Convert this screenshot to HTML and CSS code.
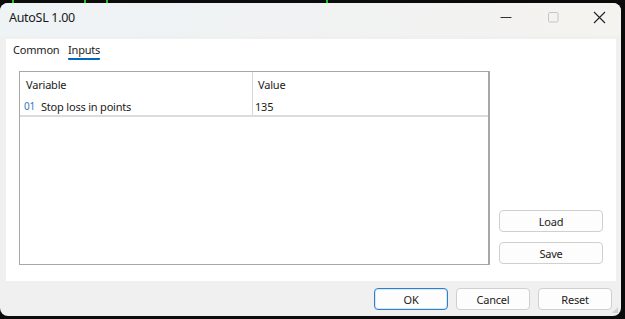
FILE: index.html
```html
<!DOCTYPE html>
<html lang="en">

<head>
    <meta charset="UTF-8" />
    <meta name="viewport" content="width=device-width, initial-scale=1.0" />
    <title>AutoSL 1.00</title>
    <link rel="stylesheet" href="styles.css">
</head>

<body>
    <div class="chart-strip">
        <span class="tick t1"></span>
        <span class="tick t2"></span>
        <span class="tick t3"></span>
        <span class="tick t4"></span>
    </div>

    <div class="window">
        <div class="titlebar">
            <span class="title">AutoSL 1.00</span>
            <div class="caption-buttons">
                <span class="cap">
                    <svg width="12" height="12" viewBox="0 0 12 12"><path d="M0.5 6.5h11" stroke="#333" stroke-width="1" /></svg>
                </span>
                <span class="cap">
                    <svg width="12" height="12" viewBox="0 0 12 12"><rect x="1.5" y="1.5" width="9.5" height="9.5" rx="1.2" fill="none" stroke="#c4c4c4" stroke-width="1" /></svg>
                </span>
                <span class="cap">
                    <svg width="13" height="13" viewBox="0 0 13 13"><path d="M1 1l11 11M12 1l-11 11" stroke="#222" stroke-width="1.1" /></svg>
                </span>
            </div>
        </div>

        <div class="content">
            <div class="panel">
                <div class="tabs">
                    <span class="tab">Common</span>
                    <span class="tab active">Inputs</span>
                </div>

                <div class="panel-body">
                    <div class="grid">
                        <div class="grid-head">
                            <div class="col-var">Variable</div>
                            <div class="col-val">Value</div>
                        </div>
                        <div class="grid-row">
                            <div class="col-var"><span class="idx">01</span>Stop loss in points</div>
                            <div class="col-val">135</div>
                        </div>
                    </div>

                    <div class="side-buttons">
                        <button class="btn">Load</button>
                        <button class="btn">Save</button>
                    </div>
                </div>
            </div>
        </div>

        <div class="footer">
            <button class="btn default">OK</button>
            <button class="btn">Cancel</button>
            <button class="btn">Reset</button>
            <span class="grip"></span>
        </div>
    </div>
</body>

</html>
```

FILE: styles.css
```css
body {
    background: #0b0b0b;
    font-family: 'Noto Sans', 'Open Sans', sans-serif;
    font-size: 11px;
    letter-spacing: -0.2px;
    color: #1b1b1b;
    margin: 0;
    width: 625px;
    height: 319px;
    overflow: hidden;
}

.chart-strip {
    height: 3px;
    position: relative;
}

.tick {
    position: absolute;
    top: 0;
    height: 3px;
    width: 2px;
    background: #19c619;
}

.t1 { left: 12px; }
.t2 { left: 84px; }
.t3 { left: 106px; }
.t4 { left: 326px; }

.window {
    width: 621px;
    height: 313px;
    border-radius: 8px;
    background: #f0f0f0;
    display: flex;
    flex-direction: column;
    overflow: hidden;
}

.titlebar {
    height: 33px;
    flex: none;
    display: flex;
    align-items: center;
    justify-content: space-between;
    padding-bottom: 5px;
    box-sizing: border-box;
    background: linear-gradient(to right, #eef3f6, #f1f2f2 60%, #f5f3ef);
}

.title {
    font-size: 12.5px;
    letter-spacing: -0.3px;
    padding-left: 9px;
    color: #1a1a1a;
}

.caption-buttons {
    display: flex;
    align-items: center;
    margin-right: -2px;
}

.cap {
    width: 47px;
    display: flex;
    justify-content: center;
    align-items: center;
}

.content {
    padding: 3px 5px 0 6px;
}

.panel {
    background: #fff;
    height: 242px;
    padding: 0 13px;
    box-sizing: border-box;
}

.tabs {
    display: flex;
    height: 32px;
    margin-left: -6px;
}

.tab {
    padding-top: 2px;
    line-height: 17px;
    height: 21px;
    box-sizing: border-box;
}

.tab:first-child {
    width: 55px;
}

.tab.active {
    border-bottom: 2px solid #0067c0;
    border-radius: 1px;
}

.panel-body {
    display: flex;
    gap: 9px;
}

.grid {
    width: 471px;
    height: 194px;
    box-sizing: border-box;
    border: 1px solid #a8a8a8;
    border-right-width: 2px;
}

.grid-head,
.grid-row {
    display: flex;
}

.grid-head {
    height: 25px;
    align-items: center;
}

.grid-row {
    height: 18px;
    border-bottom: 2px solid #dcdcdc;
}

.col-var {
    width: 233px;
    padding-left: 6px;
    border-right: 1px solid #d6d6d6;
    box-sizing: border-box;
    height: 100%;
    display: flex;
    align-items: center;
}

.col-val {
    padding-left: 5px;
    display: flex;
    align-items: center;
}

.grid-row .col-val {
    padding-left: 2px;
}

.grid-row .col-var {
    padding-left: 4px;
}

.idx {
    color: #2f78c4;
    font-size: 10px;
    width: 17px;
}

.side-buttons {
    display: flex;
    flex-direction: column;
    justify-content: flex-end;
    gap: 10px;
    padding-bottom: 1px;
}

.btn {
    font-family: inherit;
    font-size: 11px;
    letter-spacing: -0.2px;
    color: #1b1b1b;
    width: 104px;
    height: 22px;
    background: #fdfdfd;
    border: 1px solid #d0d0d0;
    border-radius: 4px;
    padding: 0;
}

.footer {
    display: flex;
    justify-content: flex-end;
    gap: 8px;
    padding: 7px 9px 0 0;
    position: relative;
    flex: 1;
}

.footer .btn {
    width: 74px;
}

.btn.default {
    border: 1px solid #2f7fd0;
    box-shadow: inset 0 0 0 1px #d6e7f7;
}

.grip {
    position: absolute;
    right: 3px;
    bottom: 3px;
    width: 6px;
    height: 6px;
    background: radial-gradient(circle, #b0b0b0 0.6px, transparent 0.8px) 0 0 / 2px 2px;
    clip-path: polygon(100% 0, 100% 100%, 0 100%);
}
```
